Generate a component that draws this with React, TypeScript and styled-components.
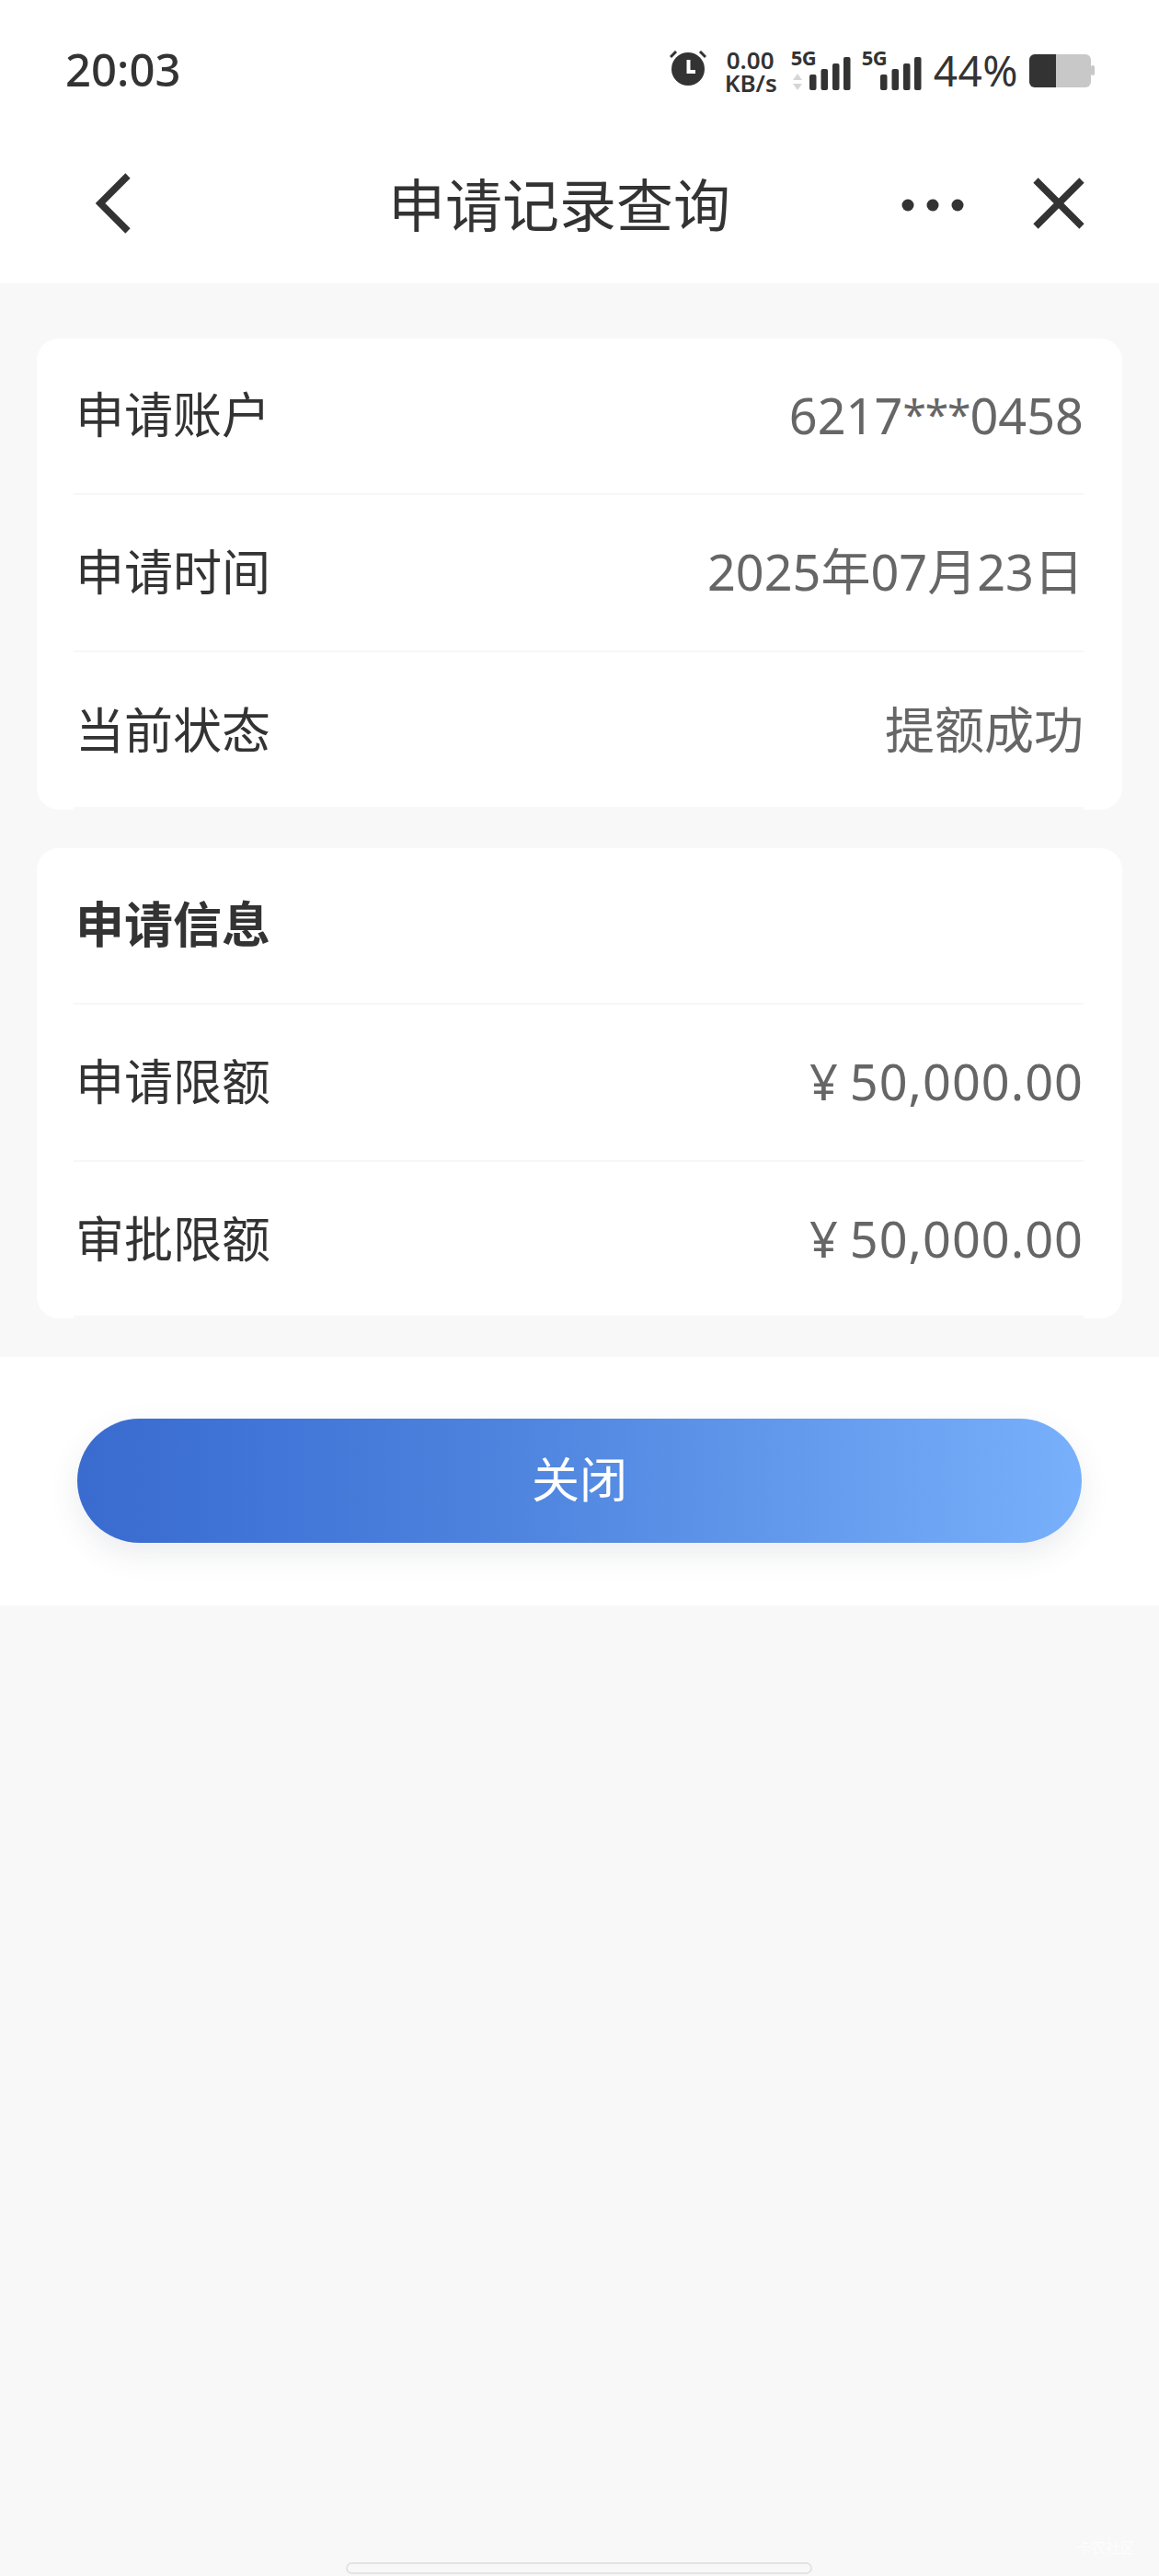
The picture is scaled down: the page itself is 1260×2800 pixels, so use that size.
import React from "react";
import styled, { createGlobalStyle } from "styled-components";

const Global = createGlobalStyle`
  html, body { margin: 0; padding: 0; background: #f8f8f8; }
  * { box-sizing: border-box; }
`;

const FONT = `"Noto Sans", "Noto Sans CJK SC", sans-serif`;
const CJK = `"Noto Sans CJK SC", sans-serif`;

const Page = styled.div`
  position: relative;
  width: 1260px;
  height: 2800px;
  background: #f8f8f8;
  font-family: ${FONT};
  color: #333;
  overflow: hidden;
`;

const Header = styled.header`
  height: 308px;
  background: #fff;
  display: flex;
  flex-direction: column;
`;

const StatusBar = styled.div`
  height: 150px;
  padding: 53px 69px 0 71px;
  display: flex;
  justify-content: space-between;
  align-items: flex-start;
`;

const Time = styled.div`
  font-size: 49px;
  line-height: 44px;
  font-weight: 500;
  color: #333;
  width: 126px;
`;

const StatusIcons = styled.div`
  display: flex;
  align-items: flex-start;
`;

const Speed = styled.div`
  width: 56px;
  margin: 0 16px 0 20px;
  font-size: 26px;
  line-height: 25px;
  font-weight: 600;
  text-align: center;
  color: #333;
  white-space: nowrap;
`;

const NetSlot = styled.div`
  position: relative;
  width: 64px;
  height: 46px;
  margin-right: 13px;
`;

const NetLabel = styled.span`
  position: absolute;
  left: 0;
  top: -2px;
  font-size: 22px;
  line-height: 22px;
  font-weight: 700;
  letter-spacing: -0.5px;
  color: #333;
`;

const Percent = styled.div`
  font-size: 46px;
  line-height: 44px;
  font-weight: 400;
  margin: 1px 12px 0 1px;
  letter-spacing: 0.5px;
  color: #333;
  white-space: nowrap;
`;

const NavBar = styled.nav`
  flex: 1;
  display: grid;
  grid-template-columns: 318px auto 1fr;
  align-items: center;
  padding: 0 81px 0 104px;
  margin-top: -16px;
`;

const NavActions = styled.div`
  display: flex;
  align-items: center;
  justify-content: flex-end;
  gap: 75px;
`;

const NavTitle = styled.h1`
  margin: 0 0 2px;
  font-family: ${CJK};
  font-size: 62px;
  line-height: 80px;
  font-weight: 400;
  color: #333;
  white-space: nowrap;
`;

const Cards = styled.main`
  padding: 60px 40px 0;
  display: flex;
  flex-direction: column;
  gap: 42px;
`;

const Card = styled.section`
  position: relative;
  background: #fff;
  border-radius: 24px;
  padding: 0 42px 0 40px;
  &::after {
    content: "";
    position: absolute;
    left: 40px;
    right: 42px;
    bottom: 0;
    height: 3px;
    background: #f8f8f8;
  }
`;

const Row = styled.div<{ $height: number }>`
  height: ${(p) => p.$height}px;
  display: flex;
  align-items: center;
  justify-content: space-between;
  &:not(:last-child) {
    border-bottom: 2px solid #f7f7f7;
  }
`;

const Label = styled.div<{ $bold?: boolean }>`
  font-family: ${CJK};
  font-size: 53px;
  line-height: 70px;
  margin: -8px 0 0 2px;
  font-weight: ${(p) => (p.$bold ? 700 : 400)};
  color: #333;
`;

const Value = styled.div<{ $money?: boolean }>`
  font-size: 54px;
  line-height: 70px;
  margin: -4px 0 0 0;
  color: #666;
  white-space: nowrap;
  letter-spacing: ${(p) => (p.$money ? "1px" : "0")};
  word-spacing: ${(p) => (p.$money ? "-3px" : "0")};
`;

const Mask = styled.span`
  font-size: 46px;
  letter-spacing: -1px;
  vertical-align: 0.08em;
`;

const Footer = styled.div`
  margin-top: 42px;
  height: 270px;
  padding: 67px 84px 0;
  background: #fff;
`;

const CloseButton = styled.button`
  display: block;
  width: 1092px;
  height: 135px;
  border: 0;
  border-radius: 68px;
  padding: 0 0 8px;
  background: linear-gradient(
    90deg,
    #3a6bcf 0%,
    #4276d8 20%,
    #4e84de 43%,
    #78b0fb 100%
  );
  box-shadow: 0 12px 32px rgba(60, 70, 90, 0.1);
  color: #fff;
  font-family: ${CJK};
  font-size: 52px;
  line-height: 127px;
  font-weight: 400;
`;

const HomeBar = styled.div`
  position: absolute;
  left: 376px;
  top: 2785px;
  width: 507px;
  height: 13px;
  border: 2.5px solid #e3e3e3;
  border-radius: 7px;
  background: #f8f8f8;
`;

const Watermark = styled.div`
  position: absolute;
  right: 26px;
  top: 2757px;
  font-family: ${CJK};
  font-size: 16px;
  line-height: 22px;
  color: #ffffff;
  opacity: 0.8;
  white-space: nowrap;
`;

const AlarmSvg = styled.svg`
  margin-top: 2px;
`;

const BarsSvg = styled.svg`
  position: absolute;
  left: 20px;
  top: 9px;
`;

const ArrowsSvg = styled.svg`
  position: absolute;
  left: 1px;
  top: 27px;
`;

const BatterySvg = styled.svg`
  margin-top: 5px;
`;

const MoreSvg = styled.svg`
  margin-top: 3px;
`;

const Alarm = () => (
  <AlarmSvg width="40" height="40" viewBox="0 0 40 40">
    <circle cx="20" cy="20" r="18" fill="#333" />
    <path d="M1 7 L7 1 M39 7 L33 1" stroke="#333" strokeWidth="3" />
    <path d="M18.5 10 h4 v11 h5.5 v4 h-9.5 z" fill="#fff" />
  </AlarmSvg>
);

const Bars = () => (
  <BarsSvg width="45" height="36" viewBox="0 0 45 36">
    <rect x="0" y="19" width="7.5" height="17" rx="2" fill="#333" />
    <rect x="12.5" y="13" width="7.5" height="23" rx="2" fill="#333" />
    <rect x="25" y="7" width="7.5" height="29" rx="2" fill="#333" />
    <rect x="37" y="0" width="7.5" height="36" rx="2" fill="#333" />
  </BarsSvg>
);

const Arrows = () => (
  <ArrowsSvg width="12" height="18" viewBox="0 0 12 18">
    <path d="M6 0 L11 7 H1 Z" fill="#d6d6d6" />
    <path d="M6 18 L11 11 H1 Z" fill="#d6d6d6" />
  </ArrowsSvg>
);

const Battery = () => (
  <BatterySvg width="72" height="38" viewBox="0 0 72 38">
    <rect x="0" y="1" width="67" height="36" rx="6" fill="#c8c8c8" />
    <rect x="67" y="13" width="4" height="11" rx="2" fill="#c8c8c8" />
    <path d="M6 1 H29 V37 H6 a6 6 0 0 1 -6 -6 V7 a6 6 0 0 1 6 -6 z" fill="#333" />
  </BatterySvg>
);

const BackIcon = () => (
  <svg width="38" height="66" viewBox="0 0 38 66">
    <path d="M35 3 L5 33 L35 63" fill="none" stroke="#333" strokeWidth="7.5" />
  </svg>
);

const MoreIcon = () => (
  <MoreSvg width="68" height="14" viewBox="0 0 68 14">
    <circle cx="7" cy="7" r="6.5" fill="#333" />
    <circle cx="34" cy="7" r="6.5" fill="#333" />
    <circle cx="61" cy="7" r="6.5" fill="#333" />
  </MoreSvg>
);

const CloseIcon = () => (
  <svg width="56" height="56" viewBox="0 0 56 56">
    <path d="M3 3 L53 53 M53 3 L3 53" fill="none" stroke="#333" strokeWidth="7.5" />
  </svg>
);

export default function App() {
  return (
    <Page>
      <Global />
      <Header>
        <StatusBar>
          <Time>20:03</Time>
          <StatusIcons>
            <Alarm />
            <Speed>
              0.00
              <br />
              KB/s
            </Speed>
            <NetSlot>
              <NetLabel>5G</NetLabel>
              <Arrows />
              <Bars />
            </NetSlot>
            <NetSlot>
              <NetLabel>5G</NetLabel>
              <Bars />
            </NetSlot>
            <Percent>44%</Percent>
            <Battery />
          </StatusIcons>
        </StatusBar>
        <NavBar>
          <BackIcon />
          <NavTitle>申请记录查询</NavTitle>
          <NavActions>
            <MoreIcon />
            <CloseIcon />
          </NavActions>
        </NavBar>
      </Header>
      <Cards>
        <Card>
          <Row $height={170}>
            <Label>申请账户</Label>
            <Value>
              6217<Mask>***</Mask>0458
            </Value>
          </Row>
          <Row $height={171}>
            <Label>申请时间</Label>
            <Value>2025年07月23日</Value>
          </Row>
          <Row $height={171}>
            <Label>当前状态</Label>
            <Value>提额成功</Value>
          </Row>
        </Card>
        <Card>
          <Row $height={170}>
            <Label $bold>申请信息</Label>
          </Row>
          <Row $height={171}>
            <Label>申请限额</Label>
            <Value $money>¥ 50,000.00</Value>
          </Row>
          <Row $height={170}>
            <Label>审批限额</Label>
            <Value $money>¥ 50,000.00</Value>
          </Row>
        </Card>
      </Cards>
      <Footer>
        <CloseButton>关闭</CloseButton>
      </Footer>
      <Watermark>卡农社区</Watermark>
      <HomeBar />
    </Page>
  );
}
